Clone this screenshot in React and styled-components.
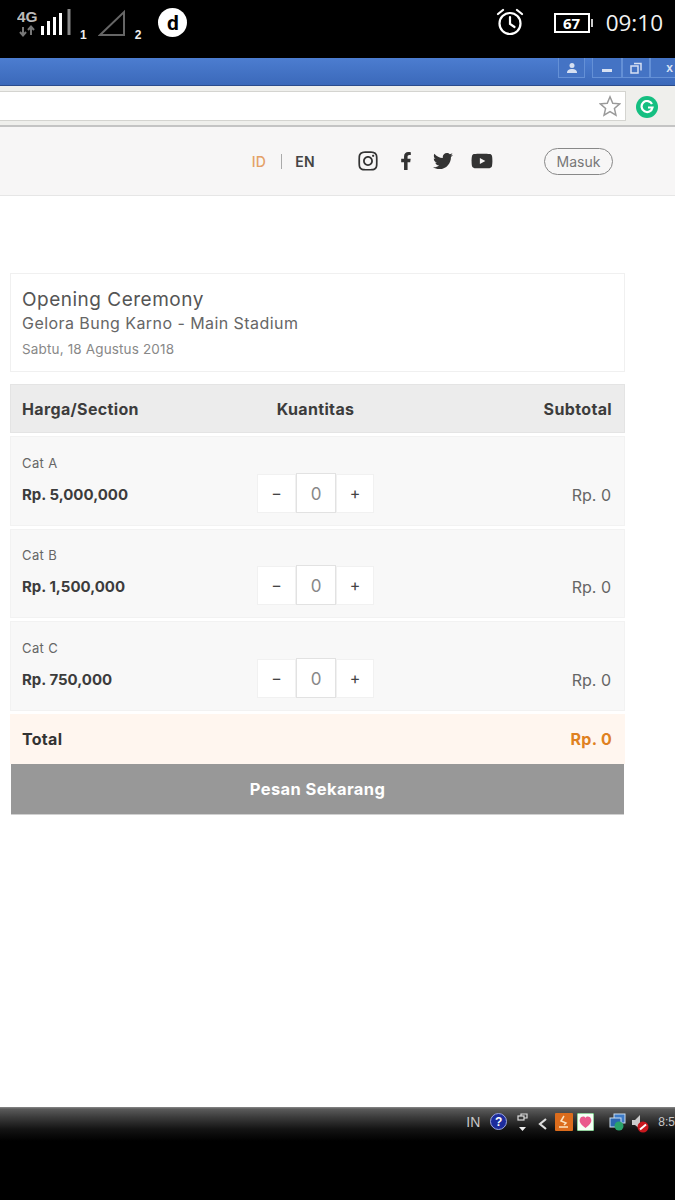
import React from 'react';
import styled, { createGlobalStyle } from 'styled-components';
import { FaInstagram, FaFacebookF, FaTwitter, FaYoutube } from 'react-icons/fa';

const GlobalStyle = createGlobalStyle`
    html, body {
        margin: 0;
        padding: 0;
        background: #fff;
    }
    * {
        box-sizing: border-box;
    }
`;

const Page = styled.div`
    width: 675px;
    height: 1200px;
    overflow: hidden;
    display: flex;
    flex-direction: column;
    font-family: Inter, "Open Sans", sans-serif;
    color: #3a3a3a;
`;

/* phone status bar */
const StatusBar = styled.div`
    height: 58px;
    flex: none;
    background: #000;
    color: #fff;
    display: flex;
    align-items: flex-start;
    justify-content: space-between;
    padding: 8px 12px 0 17px;
`;

const StatusGroup = styled.div`
    display: flex;
    align-items: flex-start;
`;

const SimTag = styled.span`
    font: 700 12px "Liberation Sans", sans-serif;
    margin: 20px 0 0 ${(p) => p.$left}px;
    color: #eee;
`;

const WeakSignal = styled.svg`
    margin: 1px 0 0 11px;
`;

const Dot = styled.div`
    width: 29px;
    height: 29px;
    margin-left: 17px;
    border-radius: 50%;
    background: #fff;
    color: #000;
    display: flex;
    align-items: center;
    justify-content: center;
    font: 700 21px/26px Roboto, sans-serif;
`;

const Battery = styled.div`
    width: 36px;
    height: 20px;
    margin: 5px 0 0 30px;
    border: 2px solid #fff;
    display: flex;
    align-items: center;
    justify-content: center;
    font: 700 15px "Open Sans", sans-serif;
    position: relative;
    &::after {
        content: '';
        position: absolute;
        right: -5px;
        top: 4px;
        width: 2px;
        height: 8px;
        background: #ccc;
    }
`;

const Clock = styled.div`
    margin-left: 16px;
    font: 400 22.5px/30px "Open Sans", sans-serif;
    color: #f2f2f2;
`;

/* desktop browser chrome */
const TitleBar = styled.div`
    height: 28px;
    flex: none;
    background: linear-gradient(#4c7dd0, #3b69ba);
    border-bottom: 1px solid #2b4c8c;
    display: flex;
    justify-content: flex-end;
    gap: 7px;
`;

const WinGroup = styled.div`
    display: flex;
    height: 20px;
    margin-right: ${(p) => p.$right || 0}px;
`;

const WinButton = styled.div`
    width: ${(p) => p.$w}px;
    padding-left: ${(p) => p.$pad || 0}px;
    display: flex;
    align-items: center;
    justify-content: center;
    border: 1px solid #6490d6;
    border-top: none;
    color: #d6e0f2;
    background: #4473c4;
    font: 700 12px "Liberation Sans", sans-serif;
`;

const Toolbar = styled.div`
    height: 41px;
    flex: none;
    background: #efefec;
    border-bottom: 2px solid #c4c4c4;
    display: flex;
    align-items: flex-start;
    padding-top: 5px;
`;

const Address = styled.div`
    width: 626px;
    height: 30px;
    background: #fff;
    border: 1px solid #d4d4d0;
    border-left: none;
    display: flex;
    align-items: center;
    justify-content: flex-end;
    padding-right: 4px;
`;

const Grammarly = styled.div`
    width: 22px;
    height: 22px;
    margin: 5px 0 0 10px;
    border-radius: 50%;
    background: #15bf81;
    display: flex;
    align-items: center;
    justify-content: center;
`;

/* site header */
const SiteHeader = styled.header`
    height: 69px;
    flex: none;
    background: #f7f6f6;
    border-bottom: 1px solid #e6e6e6;
    display: flex;
    align-items: center;
    justify-content: flex-end;
    padding-right: 62px;
`;

const Lang = styled.span`
    font-size: 14px;
    letter-spacing: 0.3px;
    font-weight: ${(p) => (p.$active ? 500 : 600)};
    color: ${(p) => (p.$active ? '#e4a067' : '#444')};
`;

const LangSep = styled.span`
    width: 1px;
    height: 15px;
    background: #aaa;
    margin: 0 13px 0 15px;
`;

const Socials = styled.div`
    display: flex;
    align-items: center;
    gap: 18px;
    margin: 0 51px 0 42px;
    color: #333;
`;

const LoginButton = styled.button`
    width: 69px;
    height: 27px;
    padding: 0;
    background: transparent;
    border: 1.5px solid #888;
    border-radius: 14px;
    font: 400 14px Inter, sans-serif;
    color: #777;
`;

/* order form */
const Main = styled.main`
    flex: 1;
    padding: 77px 50px 0 10px;
`;

const EventCard = styled.section`
    height: 99px;
    border: 1px solid #f0f0f0;
    padding: 14px 11px 0;
    margin-bottom: 12px;
`;

const EventTitle = styled.div`
    font-size: 19px;
    letter-spacing: 0.5px;
    line-height: 24px;
    color: #555;
`;

const EventVenue = styled.div`
    font-size: 16px;
    letter-spacing: 0.44px;
    line-height: 23px;
    color: #666;
`;

const EventDate = styled.div`
    font-size: 13.5px;
    letter-spacing: 0.15px;
    line-height: 28px;
    color: #888;
`;

const TableHead = styled.div`
    height: 49px;
    background: #ececec;
    border: 1px solid #e4e4e4;
    display: grid;
    grid-template-columns: 235px 117px 1fr;
    align-items: center;
    padding: 0 12px 0 11px;
    font-size: 16px;
    letter-spacing: 0.35px;
    font-weight: 700;
    color: #3c3c3c;
    margin-bottom: 3px;
`;

const CenterCell = styled.div`
    text-align: center;
    white-space: nowrap;
`;

const RightCell = styled.div`
    text-align: right;
`;

const TicketRow = styled.div`
    height: ${(p) => p.$h}px;
    background: #f8f8f8;
    border: 1px solid #f2f2f2;
    display: grid;
    grid-template-columns: 235px 117px 1fr;
    align-items: end;
    padding: 0 13px 12px 11px;
    margin-bottom: 3px;
`;

const TicketName = styled.div`
    font-size: 13px;
    letter-spacing: 0.4px;
    line-height: 18px;
    color: #666;
    margin-bottom: 13px;
`;

const TicketPrice = styled.div`
    font-size: 15px;
    line-height: 20px;
    font-weight: 700;
    color: #3c3c3c;
    margin-bottom: 8px;
`;

const Qty = styled.div`
    display: flex;
    align-items: center;
    height: 40px;
`;

const QtyButton = styled.div`
    width: ${(p) => p.$w}px;
    height: 39px;
    background: #fff;
    border: 1px solid #f1f1f1;
    display: flex;
    align-items: center;
    justify-content: center;
    font-size: 16px;
    color: #444;
`;

const QtyValue = styled.div`
    width: 40px;
    height: 40px;
    padding-top: 2px;
    background: #fff;
    border: 1px solid #e2e2e2;
    display: flex;
    align-items: center;
    justify-content: center;
    font-size: 17px;
    color: #888;
`;

const Subtotal = styled.div`
    text-align: right;
    font-size: 16px;
    line-height: 20px;
    color: #666;
    margin-bottom: 8px;
`;

const TotalRow = styled.div`
    height: 50px;
    background: #fff6ef;
    display: flex;
    align-items: center;
    justify-content: space-between;
    padding: 0 13px 0 12px;
    font-size: 16px;
    letter-spacing: 0.3px;
    font-weight: 700;
    color: #333;
`;

const TotalValue = styled.span`
    color: #df8121;
`;

const OrderButton = styled.div`
    height: 51px;
    margin: 0 1px;
    background: #989898;
    border-bottom: 1px solid #d0d0d0;
    display: flex;
    align-items: center;
    justify-content: center;
    color: #fff;
    font-size: 16.5px;
    letter-spacing: 0.4px;
    font-weight: 700;
`;

/* windows taskbar and the black phone edge */
const Taskbar = styled.div`
    height: 93px;
    flex: none;
    background: linear-gradient(#8a8a8a 0, #5b5b5b 2px, #3c3c3c 10px, #141414 22px, #000 34px);
    display: flex;
    align-items: flex-start;
    justify-content: flex-end;
    padding-top: 6px;
    white-space: nowrap;
`;

const TrayText = styled.span`
    font: 400 ${(p) => p.$size}px/18px "Liberation Sans", sans-serif;
    margin-left: ${(p) => p.$left || 0}px;
    color: #c8c8c8;
`;

const TraySlot = styled.span`
    display: flex;
    margin-left: ${(p) => p.$left}px;
`;

const tickets = [
    { name: 'Cat A', price: 'Rp. 5,000,000', h: 90 },
    { name: 'Cat B', price: 'Rp. 1,500,000', h: 89 },
    { name: 'Cat C', price: 'Rp. 750,000', h: 90 },
];

function SignalIcon() {
    return (
        <svg width="66" height="30" viewBox="0 0 66 30">
            <text x="0" y="14" fontFamily="Liberation Sans" fontWeight="700" fontSize="15.500" fill="#bbb">4G</text>
            <path d="M6 19v8M3 24l3 3.500 3-3.500M14 27v-8M11 22l3-3.500 3 3.500" stroke="#777" strokeWidth="2" fill="none" />
            <path d="M25.500 18v9M31.500 13v14M37.500 9v18M43.500 5v22" stroke="#fff" strokeWidth="3" />
            <path d="M52 1v26" stroke="#888" strokeWidth="3" />
        </svg>
    );
}

function AlarmIcon() {
    return (
        <svg width="28" height="28" viewBox="0 0 28 28" fill="none" stroke="#fff" strokeWidth="2.200" strokeLinecap="round">
            <circle cx="14" cy="15.500" r="10.500" />
            <path d="M14 9v7l4.500 3M2 6l5-4M26 6l-5-4" />
        </svg>
    );
}

function ProfileIcon() {
    return (
        <svg width="12" height="12" viewBox="0 0 12 12" fill="#d6e0f2">
            <circle cx="6" cy="3.500" r="2.500" />
            <path d="M1 11c0-3 2-4 5-4s5 1 5 4z" />
        </svg>
    );
}

function MinimizeIcon() {
    return (
        <svg width="12" height="12" viewBox="0 0 12 12" fill="#d6e0f2">
            <rect x="1" y="7" width="10" height="3" />
        </svg>
    );
}

function RestoreIcon() {
    return (
        <svg width="12" height="12" viewBox="0 0 12 12" fill="none" stroke="#d6e0f2" strokeWidth="1.500">
            <rect x="1" y="4" width="7" height="7" />
            <path d="M4 1.500h7v7" />
        </svg>
    );
}

function StarIcon() {
    return (
        <svg width="22" height="22" viewBox="0 0 24 24" fill="#fff" stroke="#9a9a9a" strokeWidth="1.600">
            <path d="M12 2l3 7 7.500.700-5.700 5 1.700 7.300-6.500-3.900L5.500 22l1.700-7.300-5.700-5L9 9z" />
        </svg>
    );
}

function TrayIcons() {
    return (
        <>
            <TraySlot $left={10}>
                <svg width="17" height="17" viewBox="0 0 17 17">
                    <circle cx="8.500" cy="8.500" r="8" fill="#1d2c9c" stroke="#9ca6e0" />
                    <text x="5" y="13" fontFamily="Liberation Sans" fontWeight="700" fontSize="12" fill="#fff">?</text>
                </svg>
            </TraySlot>
            <TraySlot $left={10}>
                <svg width="12" height="20" viewBox="0 0 12 20" fill="none" stroke="#ddd" strokeWidth="1.200">
                    <rect x="1" y="3" width="6" height="4" />
                    <path d="M4 3V1h6v4H7" />
                    <path d="M2 14h7l-3.500 4z" fill="#eee" stroke="none" />
                </svg>
            </TraySlot>
            <TraySlot $left={9}>
                <svg width="10" height="20" viewBox="0 0 10 20" fill="none" stroke="#ddd" strokeWidth="2.200">
                    <path d="M8 6l-6 5 6 5" />
                </svg>
            </TraySlot>
            <TraySlot $left={7}>
                <svg width="18" height="18" viewBox="0 0 18 18">
                    <rect width="18" height="18" rx="1" fill="#dc6c1c" />
                    <path d="M4 14h9M9 3L6 8l5 2-2 2" stroke="#fbe3c0" strokeWidth="1.500" fill="none" />
                </svg>
            </TraySlot>
            <TraySlot $left={4}>
                <svg width="17" height="18" viewBox="0 0 17 18">
                    <rect width="17" height="18" rx="1" fill="#f5fff5" stroke="#2f9e44" />
                    <path d="M8.500 15C3 11 2 8 3 6c1-3 4.500-3 5.500-1 1-2 4.500-2 5.500 1 1 2 0 5-5.500 9z" fill="#ea5a8c" />
                </svg>
            </TraySlot>
            <TraySlot $left={15}>
                <svg width="18" height="18" viewBox="0 0 18 18">
                    <rect x="5" y="1" width="11" height="9" fill="#3d7bc8" stroke="#cde" />
                    <rect x="1" y="5" width="11" height="9" fill="#2b66b0" stroke="#cde" />
                    <circle cx="10" cy="13" r="4.500" fill="#2aa36b" />
                </svg>
            </TraySlot>
            <TraySlot $left={4}>
                <svg width="18" height="20" viewBox="0 0 18 20">
                    <path d="M1 7h3l5-5v14l-5-4H1z" fill="#ccc" />
                    <circle cx="12" cy="14" r="5.500" fill="#c8181e" />
                    <path d="M9 16.500l6-5" stroke="#fff" strokeWidth="2" />
                </svg>
            </TraySlot>
        </>
    );
}

export default function App() {
    return (
        <Page>
            <GlobalStyle />
            <StatusBar>
                <StatusGroup>
                    <SignalIcon />
                    <SimTag $left={-3}>1</SimTag>
                    <WeakSignal width="28" height="28" viewBox="0 0 28 28" fill="none" stroke="#666" strokeWidth="2">
                        <path d="M2 26L26 3v23z" />
                    </WeakSignal>
                    <SimTag $left={9}>2</SimTag>
                    <Dot>d</Dot>
                </StatusGroup>
                <StatusGroup>
                    <AlarmIcon />
                    <Battery>67</Battery>
                    <Clock>09:10</Clock>
                </StatusGroup>
            </StatusBar>

            <TitleBar>
                <WinGroup>
                    <WinButton $w={27}><ProfileIcon /></WinButton>
                </WinGroup>
                <WinGroup $right={-4}>
                    <WinButton $w={30}><MinimizeIcon /></WinButton>
                    <WinButton $w={28}><RestoreIcon /></WinButton>
                    <WinButton $w={29} $pad={10}>x</WinButton>
                </WinGroup>
            </TitleBar>
            <Toolbar>
                <Address><StarIcon /></Address>
                <Grammarly>
                    <svg width="14" height="14" viewBox="0 0 14 14" fill="none" stroke="#fff" strokeWidth="2.200">
                        <path d="M12 4a5.500 5.500 0 1 0 .5 3.500H8" />
                    </svg>
                </Grammarly>
            </Toolbar>

            <SiteHeader>
                <Lang $active>ID</Lang>
                <LangSep />
                <Lang>EN</Lang>
                <Socials>
                    <FaInstagram size={22} />
                    <FaFacebookF size={18} />
                    <FaTwitter size={20} />
                    <FaYoutube size={22} />
                </Socials>
                <LoginButton>Masuk</LoginButton>
            </SiteHeader>

            <Main>
                <EventCard>
                    <EventTitle>Opening Ceremony</EventTitle>
                    <EventVenue>Gelora Bung Karno - Main Stadium</EventVenue>
                    <EventDate>Sabtu, 18 Agustus 2018</EventDate>
                </EventCard>
                <TableHead>
                    <div>Harga/Section</div>
                    <CenterCell>Kuantitas</CenterCell>
                    <RightCell>Subtotal</RightCell>
                </TableHead>
                {tickets.map((t) => (
                    <TicketRow key={t.name} $h={t.h}>
                        <div>
                            <TicketName>{t.name}</TicketName>
                            <TicketPrice>{t.price}</TicketPrice>
                        </div>
                        <Qty>
                            <QtyButton $w={39}>−</QtyButton>
                            <QtyValue>0</QtyValue>
                            <QtyButton $w={38}>+</QtyButton>
                        </Qty>
                        <Subtotal>Rp. 0</Subtotal>
                    </TicketRow>
                ))}
                <TotalRow>
                    <span>Total</span>
                    <TotalValue>Rp. 0</TotalValue>
                </TotalRow>
                <OrderButton>Pesan Sekarang</OrderButton>
            </Main>

            <Taskbar>
                <TrayText $size={14}>IN</TrayText>
                <TrayIcons />
                <TrayText $size={12} $left={9}>8:5</TrayText>
            </Taskbar>
        </Page>
    );
}
